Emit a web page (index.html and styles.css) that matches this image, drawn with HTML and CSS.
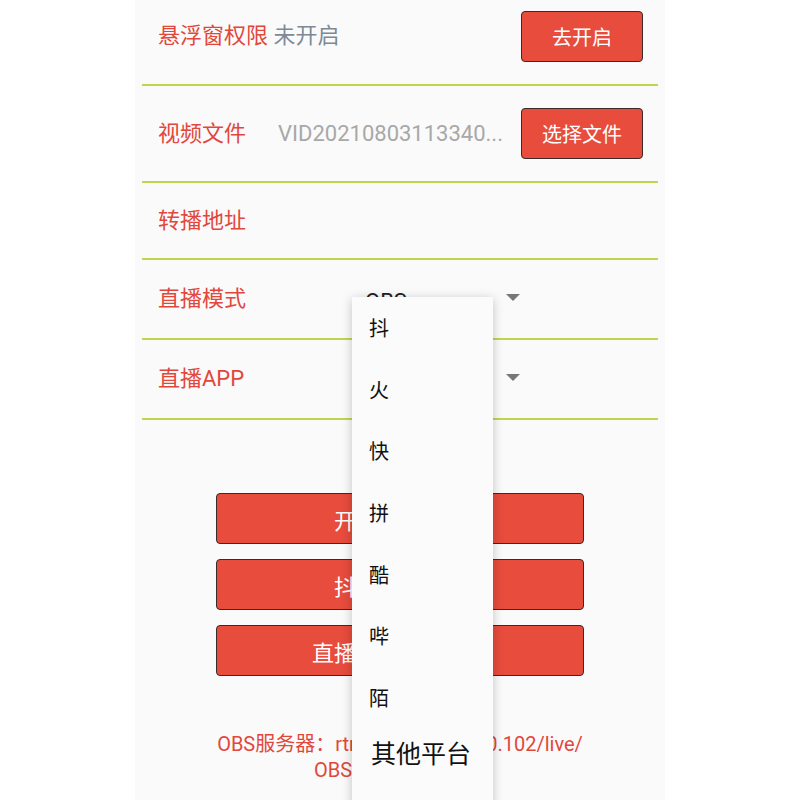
FILE: index.html
```html
<!DOCTYPE html>
<html lang="zh">
<head>
<meta charset="utf-8">
<title>直播设置</title>
<link rel="stylesheet" href="styles.css">
</head>
<body>
<div class="panel">
  <div class="row row1">
    <div class="label">悬浮窗权限 <span class="status">未开启</span></div>
    <button class="btn">去开启</button>
  </div>
  <div class="row row2">
    <div class="label">视频文件</div>
    <div class="file">VID20210803113340...</div>
    <button class="btn">选择文件</button>
  </div>
  <div class="row row3">
    <div class="label">转播地址</div>
  </div>
  <div class="row row4">
    <div class="label fixed">直播模式</div>
    <div class="spinner"><span class="spin-text">OBS</span><span class="arrow"></span></div>
  </div>
  <div class="row row5">
    <div class="label fixed">直播APP</div>
    <div class="spinner"><span class="spin-text">抖音</span><span class="arrow"></span></div>
  </div>

  <div class="actions">
    <button class="wide">开始直播推流</button>
    <button class="wide">抖音直播伴侣</button>
    <button class="wide">直播间弹幕小助手</button>
  </div>

  <div class="info">
    <div>OBS服务器：rtmp://192.168.10.102/live/</div>
    <div>OBS串流密钥：123</div>
  </div>

  <ul class="menu">
    <li>抖</li>
    <li>火</li>
    <li>快</li>
    <li>拼</li>
    <li>酷</li>
    <li>哔</li>
    <li>陌</li>
    <li class="big">其他平台</li>
  </ul>
</div>
</body>
</html>
```
FILE: styles.css
```css
html, body {
  margin: 0;
  padding: 0;
  background: #ffffff;
}
body {
  font-family: "Roboto", "Noto Sans CJK SC", sans-serif;
}
.panel {
  position: relative;
  width: 516px;
  height: 800px;
  margin-left: 135px;
  padding: 0 7px;
  background: #fafafa;
  overflow: hidden;
}
.row {
  display: flex;
  align-items: center;
  border-bottom: 2px solid #bfd64c;
  padding: 0 15px 0 16px;
  box-sizing: border-box;
}
.row1 { height: 86px; padding-bottom: 12px; }
.row2 { height: 97px; }
.row3 { height: 77px; }
.row4 { height: 80px; }
.row5 { height: 80px; }
.label {
  color: #e2473c;
  font-size: 22px;
  line-height: 30px;
  white-space: nowrap;
}
.label.fixed {
  width: 207px;
  flex: none;
}
.status {
  color: #7d8a96;
}
.file {
  flex: 1;
  min-width: 0;
  margin-left: 32px;
  color: #a8a8a8;
  font-size: 22px;
  line-height: 30px;
  white-space: nowrap;
  overflow: hidden;
}
.btn {
  margin-left: auto;
  flex: none;
  width: 122px;
  height: 51px;
  background: #e74c3c;
  border: 1px solid #3a2a28;
  border-radius: 4px;
  color: #ffffff;
  font-family: "Roboto", "Noto Sans CJK SC", sans-serif;
  font-size: 20px;
  padding: 0;
}
.row2 .btn { margin-left: 4px; }
.spinner {
  width: 155px;
  display: flex;
  align-items: center;
  justify-content: space-between;
}
.spin-text {
  color: #222222;
  font-size: 22px;
  line-height: 30px;
  position: relative;
  top: 3px;
}
.arrow {
  width: 0;
  height: 0;
  border-left: 7px solid transparent;
  border-right: 7px solid transparent;
  border-top: 7px solid #777777;
  position: relative;
  top: -2px;
}
.actions {
  width: 368px;
  margin: 73px auto 0;
  display: flex;
  flex-direction: column;
  gap: 15px;
}
.wide {
  height: 51px;
  background: #e74c3c;
  border: 1px solid #3a2a28;
  border-radius: 4px;
  color: #ffffff;
  font-family: "Roboto", "Noto Sans CJK SC", sans-serif;
  font-size: 22px;
  padding: 0;
}
.info {
  margin-top: 55px;
  text-align: center;
  color: #e2473c;
  font-size: 20px;
  line-height: 26px;
}
.menu {
  position: absolute;
  left: 217px;
  top: 297px;
  width: 141px;
  height: 560px;
  margin: 0;
  padding: 0;
  list-style: none;
  background: #fbfbfb;
  box-shadow: 0 2px 10px rgba(0, 0, 0, 0.22);
}
.menu li {
  height: 61.6px;
  display: flex;
  align-items: center;
  padding-left: 17px;
  color: #111111;
  font-size: 20px;
}
.menu li.big {
  font-size: 25px;
  padding-left: 19px;
  align-items: flex-start;
  padding-top: 6px;
  box-sizing: border-box;
}
```
